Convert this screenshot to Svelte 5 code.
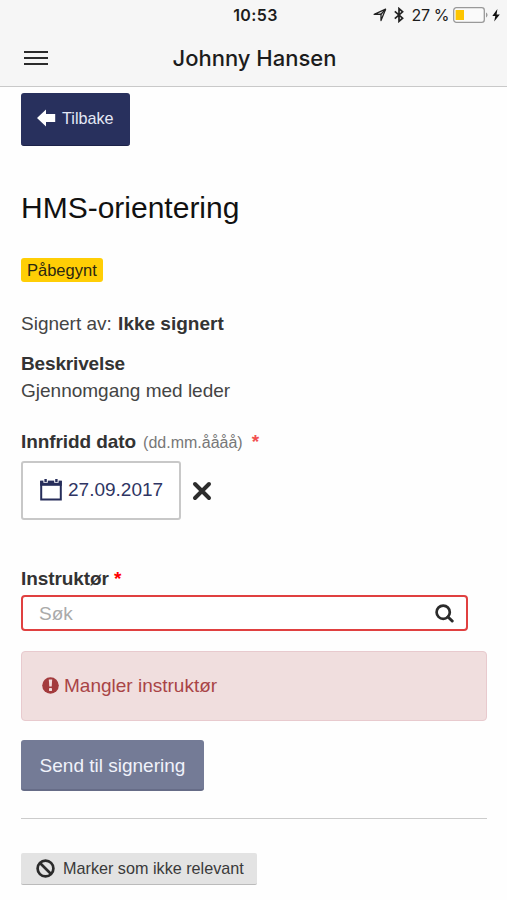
<script lang="ts">
  let name = 'Johnny Hansen';
  let title = 'HMS-orientering';
  let date = $state('27.09.2017');
  let search = $state('');
</script>

<div class="screen">
  <header class="topbar">
    <div class="status">
      <span></span>
      <span class="time">10:53</span>
      <div class="indicators">
        <svg class="location" width="14" height="14" viewBox="0 0 14 14" fill="none" stroke="#222" stroke-width="1.3" stroke-linejoin="round">
          <path d="M1.2 6.4 12.6 1.2 8 12.6 8 6.2Z" />
          <path d="M12.6 1.2 8 6.3" />
        </svg>
        <svg class="bluetooth" width="10" height="16" viewBox="0 0 10 16" fill="none" stroke="#222" stroke-width="1.7">
          <path d="M.8 4.4 8.6 11.2 5 14.3V1.6L8.6 4.8.8 11.6" />
        </svg>
        <span class="percent">27 %</span>
        <svg class="battery" width="36" height="16" viewBox="0 0 36 16">
          <rect x=".7" y=".7" width="30.6" height="14.6" rx="2.6" fill="#fafafa" stroke="#999" stroke-width="1.3" />
          <rect x="2.6" y="3" width="8.4" height="10" fill="#fdc500" />
          <path d="M33 5.6c2 .8 2 4 0 4.8z" fill="#999" />
        </svg>
        <svg class="bolt" width="8" height="13" viewBox="0 0 8 13">
          <path d="M5.4 0 .3 7h3L2.2 12.6 7.8 5.4H4.6z" fill="#111" />
        </svg>
      </div>
    </div>
    <div class="nav">
      <button class="menu" aria-label="Meny">
        <span></span>
        <span></span>
        <span></span>
      </button>
      <div class="name">{name}</div>
      <span></span>
    </div>
  </header>

  <main class="content">
    <button class="btn btn-back">
      <svg width="19" height="18" viewBox="0 0 19 18">
        <path d="M0 9 9 .5V5h9.2v8H9v4.5z" fill="#fff" />
      </svg>
      <span>Tilbake</span>
    </button>

    <h1>{title}</h1>

    <span class="badge">Påbegynt</span>

    <p class="signed">Signert av: <strong>Ikke signert</strong></p>

    <div class="description">
      <strong>Beskrivelse</strong>
      <p>Gjennomgang med leder</p>
    </div>

    <div class="label date-label">
      <strong>Innfridd dato</strong>
      <span class="hint">(dd.mm.åååå)</span>
      <span class="required soft">*</span>
    </div>
    <div class="date-row">
      <button class="date">
        <svg width="22" height="22" viewBox="0 0 22 22">
          <path d="M1.2 3h19.6v17.6H1.2z" fill="none" stroke="#262d5a" stroke-width="2" />
          <path d="M.2 1.6h21.6v5.2H.2z" fill="#262d5a" />
          <path d="M5.6 0v3.8M16.4 0v3.8" stroke="#fff" stroke-width="4.4" />
          <path d="M5.6 0v3M16.4 0v3" stroke="#262d5a" stroke-width="2.4" />
        </svg>
        <span>{date}</span>
      </button>
      <button class="clear" aria-label="Fjern dato">
        <svg width="20" height="20" viewBox="0 0 20 20" stroke="#2c2c2c" stroke-width="4" stroke-linecap="round">
          <path d="M3 3l14 14M17 3 3 17" />
        </svg>
      </button>
    </div>

    <div class="label instructor-label">
      <strong>Instruktør</strong>
      <span class="required">*</span>
    </div>
    <div class="search">
      <input type="text" placeholder="Søk" bind:value={search} />
      <svg width="19" height="19" viewBox="0 0 19 19" fill="none" stroke="#2b2b2b">
        <circle cx="8.2" cy="8.2" r="6.6" stroke-width="2.7" />
        <path d="m13 13 4.2 4" stroke-width="3" stroke-linecap="round" />
      </svg>
    </div>

    <div class="alert">
      <svg width="17" height="17" viewBox="0 0 17 17">
        <circle cx="8.5" cy="8.5" r="8.3" fill="#a33b3d" />
        <path d="M6.8 2.6h3.4l-.5 7h-2.4z" fill="#f2dede" />
        <rect x="7" y="11" width="3" height="3" rx=".4" fill="#f2dede" />
      </svg>
      <span>Mangler instruktør</span>
    </div>

    <button class="btn btn-send">Send til signering</button>

    <hr />

    <button class="btn-mark">
      <svg width="19" height="19" viewBox="0 0 19 19" fill="none" stroke="#2b2b2b" stroke-width="2.7">
        <circle cx="9.5" cy="9.5" r="7.9" />
        <path d="m4 4 11 11" />
      </svg>
      <span>Marker som ikke relevant</span>
    </button>
  </main>
</div>

<style>
  :global(body) {
    margin: 0;
    background: #fefefe;
  }

  .screen {
    height: 900px;
    overflow: hidden;
    background: #fefefe;
    color: #444;
    font-family: "Liberation Sans", Arial, sans-serif;
    font-size: 19px;
    line-height: 27px;
  }

  button {
    margin: 0;
    padding: 0;
    border: 0;
    background: none;
    font: inherit;
    color: inherit;
  }

  svg {
    display: block;
    flex-shrink: 0;
  }

  p {
    margin: 0;
  }

  strong {
    color: #333;
    letter-spacing: -0.08px;
  }

  /* Top bar */
  .topbar {
    box-sizing: border-box;
    height: 87px;
    background: #f6f6f6;
    border-bottom: 1px solid #c9c9c9;
    color: #1c1c1c;
    font-family: Inter, "Liberation Sans", sans-serif;
  }

  .status,
  .nav {
    display: grid;
    grid-template-columns: 1fr auto 1fr;
    align-items: center;
  }

  .status {
    height: 30px;
    padding: 0 7px 0 11px;
  }

  .time {
    font-size: 16px;
    font-weight: 600;
    letter-spacing: 0.4px;
  }

  .indicators {
    display: flex;
    align-items: center;
    justify-content: flex-end;
  }

  .bluetooth {
    margin-left: 7px;
  }

  .percent {
    margin-left: 8px;
    font-size: 16px;
    letter-spacing: -0.4px;
    white-space: nowrap;
  }

  .battery {
    margin-left: 4px;
  }

  .bolt {
    margin-left: 3px;
  }

  .nav {
    height: 56px;
    padding: 0 22px 0 24px;
  }

  .menu {
    display: flex;
    flex-direction: column;
    gap: 4px;
    width: 24px;
  }

  .menu span {
    height: 2px;
    background: #2b2b2b;
  }

  .name {
    font-size: 22px;
    font-weight: 500;
    letter-spacing: 0;
  }

  /* Content */
  .content {
    display: flex;
    flex-direction: column;
    align-items: flex-start;
    padding: 6px 20px 0 21px;
  }

  .btn {
    box-sizing: border-box;
    border-radius: 3px;
    color: #fff;
  }

  .btn-back {
    display: flex;
    align-items: center;
    gap: 6px;
    width: 109px;
    height: 53px;
    padding: 0 0 2px 16px;
    background: #28305d;
    border-bottom: 1px solid #1c2248;
    color: #e4e8f6;
    font-size: 16.2px;
  }

  h1 {
    margin: 42px 0 0;
    color: #111;
    font-size: 30px;
    font-weight: 400;
    line-height: 40px;
  }

  .badge {
    height: 24px;
    margin-top: 30px;
    padding: 0 6px;
    border-radius: 3px;
    background: #ffce05;
    color: #2b2712;
    font-size: 16.5px;
    line-height: 24px;
  }

  .signed {
    margin-top: 28px;
  }

  .signed strong {
    margin-left: 1px;
    letter-spacing: 0;
  }

  .description {
    margin-top: 13px;
  }

  .description strong {
    display: block;
    letter-spacing: -0.15px;
  }

  .label {
    display: flex;
    align-items: baseline;
  }

  .date-label {
    margin-top: 24px;
  }

  .hint {
    margin-left: 7px;
    color: #777;
    font-size: 16px;
  }

  .required {
    margin-left: 5px;
    color: #f00;
    font-weight: 700;
  }

  .required.soft {
    margin-left: 9px;
    color: #f25050;
  }

  .date-row {
    display: flex;
    align-items: center;
    gap: 11px;
    margin-top: 5px;
  }

  .date {
    display: flex;
    align-items: center;
    gap: 6px;
    box-sizing: border-box;
    width: 160px;
    height: 59px;
    padding: 0 0 2px 17px;
    border: 2px solid #c8c8c8;
    border-radius: 3px;
    background: #fff;
    color: #2f3563;
  }

  .instructor-label {
    margin-top: 45px;
  }

  .search {
    display: flex;
    align-items: center;
    box-sizing: border-box;
    width: 447px;
    height: 36px;
    margin-top: 3px;
    padding: 0 12px 0 16px;
    border: 2px solid #e04040;
    border-radius: 4px;
    background: #fff;
  }

  .search input {
    flex: 1;
    min-width: 0;
    padding: 0;
    border: 0;
    outline: 0;
    background: none;
    font: inherit;
  }

  .search input::placeholder {
    color: #aaa;
    opacity: 1;
  }

  .alert {
    display: flex;
    align-items: center;
    gap: 5px;
    box-sizing: border-box;
    width: 100%;
    height: 70px;
    margin-top: 20px;
    padding: 0 0 1px 20px;
    border: 1px solid #e8cace;
    border-radius: 4px;
    background: #f0dede;
    color: #a94446;
  }

  .btn-send {
    width: 183px;
    height: 51px;
    margin-top: 19px;
    padding-top: 1px;
    background: #747b96;
    border-bottom: 2px solid #666c87;
    color: #f0f2fb;
  }

  hr {
    width: 100%;
    height: 1px;
    margin: 27px 0 0;
    border: 0;
    background: #ccc;
  }

  .btn-mark {
    display: flex;
    align-items: center;
    gap: 8px;
    box-sizing: border-box;
    width: 236px;
    height: 32px;
    margin-top: 34px;
    padding: 0 0 1px 15px;
    border-bottom: 1px solid #bbb;
    border-radius: 2px;
    background: #e3e3e3;
    color: #3a3a3a;
    font-size: 16.2px;
    white-space: nowrap;
  }
</style>
